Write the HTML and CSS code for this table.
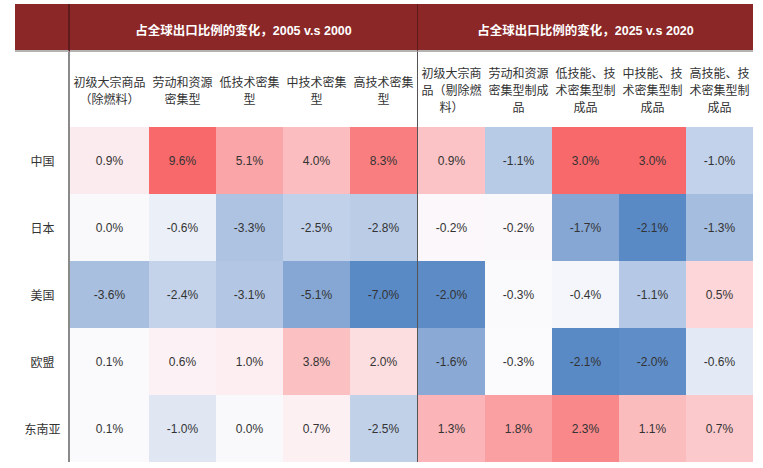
FILE: index.html
```html
<!DOCTYPE html>
<html lang="zh">
<head>
<meta charset="utf-8">
<link rel="stylesheet" href="styles.css">
</head>
<body>
<div class="sheet">
  <div class="band band-label"></div>
  <div class="band band-title span5">占全球出口比例的变化，2005 v.s 2000</div>
  <div class="band band-title span5 split-dark">占全球出口比例的变化，2025 v.s 2020</div>

  <div class="lab"></div>
  <div class="colhead">初级大宗商品（除燃料）</div>
  <div class="colhead">劳动和资源密集型</div>
  <div class="colhead">低技术密集型</div>
  <div class="colhead">中技术密集型</div>
  <div class="colhead">高技术密集型</div>
  <div class="colhead split">初级大宗商品（剔除燃料）</div>
  <div class="colhead">劳动和资源密集型制成品</div>
  <div class="colhead">低技能、技术密集型制成品</div>
  <div class="colhead">中技能、技术密集型制成品</div>
  <div class="colhead">高技能、技术密集型制成品</div>

  <div class="lab">中国</div>
  <div class="cell" style="background:#FCEBEE">0.9%</div>
  <div class="cell" style="background:#F8696B">9.6%</div>
  <div class="cell" style="background:#FAA5A7">5.1%</div>
  <div class="cell" style="background:#FBBDBF">4.0%</div>
  <div class="cell" style="background:#F97E80">8.3%</div>
  <div class="cell split" style="background:#FBC3C6">0.9%</div>
  <div class="cell" style="background:#B8CBE6">-1.1%</div>
  <div class="cell" style="background:#F8696B">3.0%</div>
  <div class="cell" style="background:#F8696B">3.0%</div>
  <div class="cell" style="background:#C2D2EA">-1.0%</div>

  <div class="lab">日本</div>
  <div class="cell" style="background:#F9F9FC">0.0%</div>
  <div class="cell" style="background:#EBEFF8">-0.6%</div>
  <div class="cell" style="background:#AEC3E2">-3.3%</div>
  <div class="cell" style="background:#C1D1E9">-2.5%</div>
  <div class="cell" style="background:#BACCE6">-2.8%</div>
  <div class="cell split" style="background:#FBF7FA">-0.2%</div>
  <div class="cell" style="background:#FBF8FB">-0.2%</div>
  <div class="cell" style="background:#86A7D3">-1.7%</div>
  <div class="cell" style="background:#5A8AC6">-2.1%</div>
  <div class="cell" style="background:#A5BDDE">-1.3%</div>

  <div class="lab">美国</div>
  <div class="cell" style="background:#A8BFDF">-3.6%</div>
  <div class="cell" style="background:#C4D3E9">-2.4%</div>
  <div class="cell" style="background:#B3C7E4">-3.1%</div>
  <div class="cell" style="background:#86A7D3">-5.1%</div>
  <div class="cell" style="background:#5A8AC6">-7.0%</div>
  <div class="cell split" style="background:#5C8BC6">-2.0%</div>
  <div class="cell" style="background:#FAFAFD">-0.3%</div>
  <div class="cell" style="background:#F4F6FB">-0.4%</div>
  <div class="cell" style="background:#B5C8E5">-1.1%</div>
  <div class="cell" style="background:#FCD6D9">0.5%</div>

  <div class="lab">欧盟</div>
  <div class="cell" style="background:#FAFAFD">0.1%</div>
  <div class="cell" style="background:#FCF2F5">0.6%</div>
  <div class="cell" style="background:#FCEEF1">1.0%</div>
  <div class="cell" style="background:#FBC0C2">3.8%</div>
  <div class="cell" style="background:#FCDDE0">2.0%</div>
  <div class="cell split" style="background:#8AAAD5">-1.6%</div>
  <div class="cell" style="background:#FBFBFE">-0.3%</div>
  <div class="cell" style="background:#5A8AC6">-2.1%</div>
  <div class="cell" style="background:#5E8DC8">-2.0%</div>
  <div class="cell" style="background:#E3EAF5">-0.6%</div>

  <div class="lab">东南亚</div>
  <div class="cell" style="background:#FAFAFD">0.1%</div>
  <div class="cell" style="background:#E0E7F3">-1.0%</div>
  <div class="cell" style="background:#F9F9FC">0.0%</div>
  <div class="cell" style="background:#FCF0F3">0.7%</div>
  <div class="cell" style="background:#C1D1E8">-2.5%</div>
  <div class="cell split" style="background:#FBB5B8">1.3%</div>
  <div class="cell" style="background:#FAA0A2">1.8%</div>
  <div class="cell" style="background:#F8888A">2.3%</div>
  <div class="cell" style="background:#FBBCBE">1.1%</div>
  <div class="cell" style="background:#FBC8CB">0.7%</div>
</div>
</body>
</html>
```

FILE: styles.css
```css
html, body {
  margin: 0;
  padding: 0;
  background: #ffffff;
}

.sheet {
  display: grid;
  grid-template-columns: 55px 79px 67px 67px 67px 67px 68px 67px 67px 67px 67px;
  grid-template-rows: 48px 75px repeat(5, 67px);
  margin: 4px 0 0 15px;
  width: 738px;
  font-family: "Liberation Sans", "Noto Sans CJK SC", sans-serif;
  font-size: 12px;
  color: #333333;
}

.band {
  background: #8B2727;
  border-bottom: 2px solid #b3b3b3;
  box-sizing: border-box;
}

.band-label {
  border-right: 2px solid #5e1b1b;
}

.band-title {
  display: flex;
  align-items: center;
  justify-content: center;
  color: #ffffff;
  font-weight: bold;
  font-size: 12.5px;
  font-family: "Liberation Sans", "Noto Sans CJK SC", sans-serif;
  padding-top: 4px;
}

.span5 {
  grid-column: span 5;
}

.split-dark {
  border-left: 1px solid #5e1b1b;
}

.lab {
  display: flex;
  align-items: center;
  justify-content: center;
  border-right: 2px solid #8a8a8a;
  box-sizing: border-box;
  font-family: "Noto Sans CJK SC", sans-serif;
  font-size: 12px;
  color: #333333;
  padding-left: 2px;
}

.colhead {
  display: flex;
  align-items: center;
  justify-content: center;
  text-align: center;
  font-family: "Noto Sans CJK SC", sans-serif;
  font-size: 12px;
  line-height: 17px;
  color: #333333;
  padding: 0 2px;
  box-sizing: border-box;
  line-break: strict;
}

.cell {
  display: flex;
  align-items: center;
  justify-content: center;
  font-family: "Liberation Sans", sans-serif;
  font-size: 12px;
  color: #333333;
}

.split {
  border-left: 1px solid #555555;
  box-sizing: border-box;
}
```
